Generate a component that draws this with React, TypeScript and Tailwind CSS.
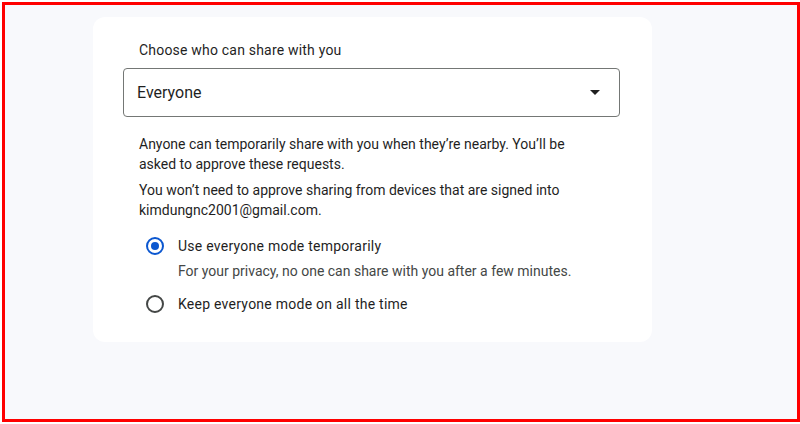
export default function App() {
  return (
    <div className="w-[800px] h-[424px] bg-white pt-[2px] pl-[2px]" style={{ fontFamily: "Roboto, 'Open Sans', sans-serif" }}>
      <div className="w-[798px] h-[420px] border-[3px] border-[#ff0000] bg-[#f8f9fc]">
        <div className="ml-[88px] mt-[12px] w-[559px] h-[325px] rounded-[12px] bg-white pl-[30px] pr-[32px] pt-[23px] text-[#1f1f1f]">
          <div className="pl-[16px] text-[14px] leading-[20px] tracking-[0.2px]">Choose who can share with you</div>
          <div className="mt-[8px] h-[49px] rounded-[4px] border border-[#747775] flex items-center justify-between pl-[13px] pr-[19px]">
            <span className="text-[16px]">Everyone</span>
            <svg width="10" height="5" viewBox="0 0 10 5">
              <path d="M0 0h10L5 5z" fill="#1f1f1f" />
            </svg>
          </div>
          <div className="pl-[16px] pr-[40px] mt-[17px] text-[14px] leading-[20px] flex flex-col gap-[6px]">
            <p>Anyone can temporarily share with you when they’re nearby. You’ll be asked to approve these requests.</p>
            <p>You won’t need to approve sharing from devices that are signed into kimdungnc2001@gmail.com.</p>
          </div>
          <div className="mt-[16px] pl-[23px] flex flex-col">
            <div className="flex items-center gap-[14px] h-[20px]">
              <span className="w-[18px] h-[18px] rounded-full border-2 border-[#0b57d0] flex items-center justify-center">
                <span className="w-[8px] h-[8px] rounded-full bg-[#0b57d0]" />
              </span>
              <span className="text-[14px] leading-[20px] tracking-[0.25px]">Use everyone mode temporarily</span>
            </div>
            <div className="pl-[32px] mt-[5px] text-[14px] leading-[20px] text-[#444746]">For your privacy, no one can share with you after a few minutes.</div>
            <div className="flex items-center gap-[14px] h-[20px] mt-[13px]">
              <span className="w-[18px] h-[18px] rounded-full border-2 border-[#444746]" />
              <span className="text-[14px] leading-[20px] tracking-[0.25px]">Keep everyone mode on all the time</span>
            </div>
          </div>
        </div>
      </div>
    </div>
  );
}
